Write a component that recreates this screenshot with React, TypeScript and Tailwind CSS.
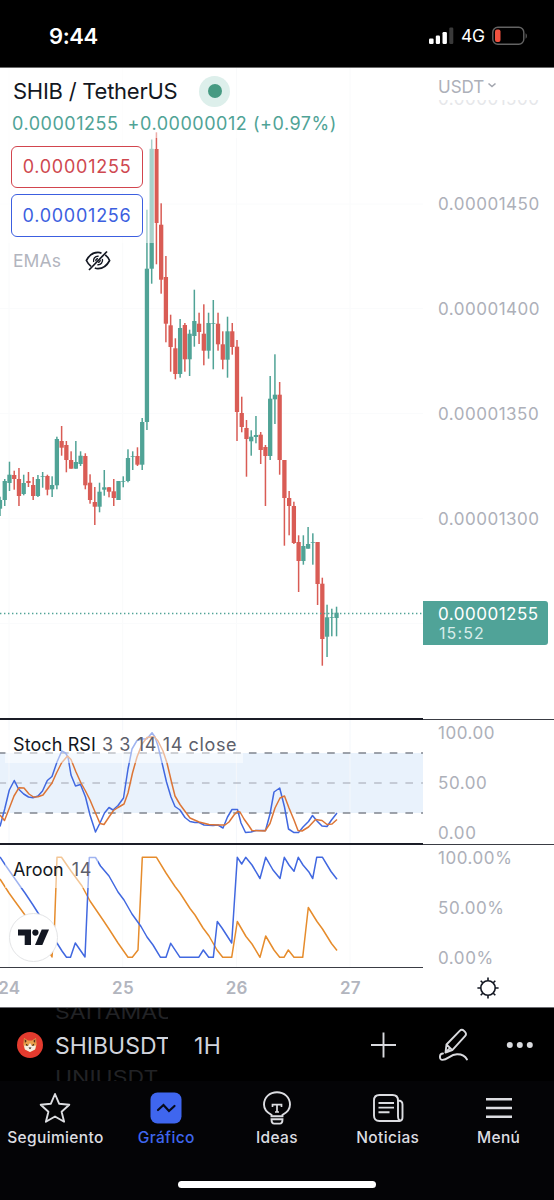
import type { ReactNode } from 'react'

type Candle = [high: number, top: number, bottom: number, low: number, up: 0 | 1]

const STEP = 4.74

const CANDLES: Candle[] = [
  [496.7, 500, 508.7, 516, 1], [479, 481, 500, 506, 1], [461.7, 474.7, 483, 491, 1],
  [470.7, 475, 479, 489.7, 0], [468, 479, 496, 506, 0], [474.7, 483, 494, 495.3, 1],
  [472, 481, 483, 487, 0], [477, 485, 496, 500, 0], [475, 479, 496, 497, 1],
  [472, 476.3, 477, 487.7, 1], [474.7, 476, 489.7, 495.3, 0], [476.3, 485, 489.3, 497, 1],
  [436.7, 439, 485.3, 489.3, 1], [426, 441, 447.7, 455.7, 0], [441, 445, 460, 472.3, 0],
  [451.3, 460, 468.7, 468.7, 0], [441, 462, 468.7, 468.7, 1], [451.3, 455.7, 464, 466, 1],
  [453.3, 456, 485.3, 489.3, 0], [474.3, 482.7, 500, 503.7, 0], [487, 502, 506.7, 525, 0],
  [482.7, 491.7, 506.7, 512.3, 1], [470, 487.3, 489.7, 495.7, 1], [487, 487.3, 491.7, 497.3, 0],
  [479, 491.3, 498, 506, 0], [481, 481, 500, 500, 1], [476.3, 481, 481.7, 487.3, 1],
  [449.3, 458, 481, 482.3, 1], [451.3, 456, 456.7, 470, 1], [447.3, 456, 464.7, 466, 0],
  [418, 422, 464.7, 470, 1], [209.7, 268.7, 422, 430, 1], [139.5, 148.8, 268.7, 283.7, 1],
  [132.3, 149, 223, 264.3, 0], [203.3, 224.7, 279.7, 293.7, 0], [256, 277, 323.7, 342.3, 0],
  [314.7, 325.3, 347, 371.7, 0], [338.3, 348.3, 374, 379.3, 0], [319, 328, 374, 377.7, 1],
  [323, 325, 359.3, 371.7, 0], [329.7, 333.7, 359.3, 376, 1], [289.7, 321, 336, 346.7, 1],
  [312.7, 323.7, 332, 344, 0], [304.3, 333.7, 350.7, 365.3, 0], [312.7, 323, 350.7, 358.7, 1],
  [300, 323.3, 324, 369.3, 1], [312.7, 323.7, 344.3, 350.7, 0], [331.3, 344.3, 359.7, 369.3, 0],
  [316.7, 331.3, 359.7, 377.7, 1], [323, 331.3, 347, 354.7, 0], [340, 346.7, 412, 441, 0],
  [396.7, 413, 427, 432.3, 0], [420, 428, 439, 476.7, 0], [430.3, 436.7, 441.3, 455.7, 1],
  [416, 435, 437, 443.3, 1], [432, 434.7, 450, 464, 0], [445, 447, 456, 506, 0],
  [376, 398.7, 456, 460, 1], [354.3, 394.7, 399.3, 424, 1], [382, 394.7, 460, 474.7, 0],
  [460, 460, 498, 545.7, 0], [491, 498, 506, 535.3, 0], [501.7, 506, 543, 544, 0],
  [535.3, 542, 561, 592, 0], [535.3, 546, 561, 564.7, 1], [527, 544, 548.7, 548.7, 1],
  [533.3, 542.3, 543, 564.7, 1], [542, 542, 584, 605, 0], [577.7, 583.7, 639, 665.7, 0],
  [604.7, 617.3, 636.7, 657, 1], [608.7, 617, 617.7, 636.3, 1], [606.7, 612.7, 618, 636.3, 1],
]

const STOCH_K =
  '0,826.5 4.7,809 9.3,790 14.3,780.5 18.5,789 23.7,794 28.5,797 33,797.7 38,796 42.5,791 47.3,780.5 52,776.5 57,762 61.8,751 65.5,753 68,757 71,775 75.5,786 80.5,784.5 85.5,797 90,815 95.5,832 100,823 104.5,813 109,807.5 113,810 118,805.5 123.5,798 128,769 132,749 137,740.5 142,739 147,738.7 152,732.7 155,737 158,746 163,767 166.5,782 171,797 175,806.5 180,810 185,817.5 190,821.5 195,822.5 199,822.5 204,825 213,825.5 218,825 223,828 227.5,817 232,809.5 237.5,809.5 241,823 245.5,832.5 251,832 256,830.5 265.5,830.5 270,814 274,792 279.7,788 284.5,807 288.5,829 294,832.6 298.5,832.6 303,827 308.5,821.5 312.5,815.5 317,821 322,826 327,826.5 331.5,820 337,813'
const STOCH_D =
  '0,815 4.5,820.5 9,809 14,796 19,787.7 24,788 29,794 33.5,797 38,796.7 43,795 52,783 56.5,773 61.5,763 67.5,756 71,759.5 76,772 81,783 85.5,791 90,800 95.5,813 100,823.5 104,824.5 109,817 113.5,810.5 118,807.5 124,804 128,793 132.5,773 137,757 142,744 147,737.5 154,736.5 158,741 163,751 167,763 171.5,782 175,796 180,804.5 185.5,812 190,818 199,822 209,824.5 218,825 225,825 229,822 234,815 237.5,811.5 240,812 244,819 249,826 252,830.5 265,831 270,823.5 275,808 280,798 284.5,796 289,808 294,820 298,830.5 302,831 308.5,827 315.5,819.5 322,820.5 327,824.5 332,824 337,819.5'
const AROON_UP =
  '0,879 9,893 14,900 25,915 50,953.5 52,957 54.5,926 57,857.3 61.5,857.3 71,871 82,886 90,901 103,920 109,929 118,943 128,957.3 132.3,957.3 138,950 142.3,857.3 156.5,857.3 166,873 175,886.5 180,893 190,908.5 195,915 203,928 209,936 217,950 222.7,957.3 231.7,957.3 237.3,921.5 246,936.5 252,944 260,957.3 265.7,936 274,950 279.7,957.3 284,957.3 288.3,950 294,957.3 302.7,957.3 308.3,907.5 317,921.5 322.5,929 331.5,943.5 337,950.5'
const AROON_DOWN =
  '0,857 6,866 20,886 25,893 33,905 39,914.5 56,941.5 62,951 66.5,957.3 70.5,957.3 75.3,943 85,957 89.3,857.5 95.5,857.5 100.5,866 109,876 118,892 124,900 132,914 141,926.5 147,937 153,945 160.5,957.3 166,957.3 170.7,943.3 180,957.3 198.7,957.3 203.3,950 208.7,957.3 213.3,957.3 217.3,921.5 222,928 231.7,943 237.3,857.3 241.7,864 245.7,857.3 252,865 260,878.5 265.7,857.3 273,870 280,878.5 284.3,857.3 289,865 294,871.3 298.3,857.3 303,865 308.7,871.7 312.7,878.5 316.7,857.3 322.5,857.3 331,871.5 337,879.3'

const DAY_LINES = [9, 122.7, 236.4, 350]
const PRICES = ['0.00001450', '0.00001400', '0.00001350', '0.00001300']

function StatusBar() {
  return (
    <div className="flex h-[68px] items-start border-b border-[#6b6b6b] bg-black pl-[49px] pr-[26px] pt-[22px] text-white">
      <span className="text-[22px] leading-[28px] font-semibold tracking-[-0.4px]">9:44</span>
      <div className="ml-auto flex h-[27px] items-center pt-px">
        <svg width="25" height="18" viewBox="0 0 25 18" fill="#fff">
          <rect x="0" y="11.5" width="4.6" height="5.5" rx="1.2" />
          <rect x="6.8" y="8.5" width="4.2" height="8.5" rx="1.2" />
          <rect x="13.5" y="5" width="4.4" height="12" rx="1.2" />
          <rect x="20.3" y="0.5" width="4" height="16.5" rx="1.2" fill="#3a3a3a" />
        </svg>
        <span className="ml-[7px] w-[24px] text-[17.5px] leading-[20px] tracking-[-0.2px]">4G</span>
        <svg className="ml-[7px]" width="36" height="20" viewBox="0 0 36 20">
          <rect x="0.8" y="1.3" width="31" height="17" rx="5" fill="none" stroke="#636363" strokeWidth="1.4" />
          <rect x="3" y="3.5" width="5.5" height="12.6" rx="2" fill="#f0513f" />
          <path d="M33.6 7.2c1.6.9 1.6 4.6 0 5.5z" fill="#636363" />
        </svg>
      </div>
    </div>
  )
}

function PriceChart() {
  return (
    <svg className="block" width="423" height="650" viewBox="0 68 423 650">
      {DAY_LINES.map((x) => (
        <path key={x} d={`M${x} 68V718`} stroke="#f9fafb" />
      ))}
      {[204, 308.5, 413.5, 518.5, 623.5].map((y) => (
        <path key={y} d={`M0 ${y}H423`} stroke="#fafbfc" />
      ))}
      {CANDLES.map(([high, top, bottom, low, up], i) => {
        const x = i * STEP
        return (
          <g key={i} fill={up ? '#50a396' : '#d95c55'}>
            <rect x={x - 0.75} y={high} width={1.5} height={low - high} />
            <rect x={x - 2.15} y={top} width={4.3} height={bottom - top} />
          </g>
        )
      })}
      <path d="M0 613.5H423" stroke="#50a396" strokeWidth="1.3" strokeDasharray="1.4 2.6" />
    </svg>
  )
}

function PricePane() {
  return (
    <div className="flex h-[652px]">
      <div className="relative w-[423px] border-b-2 border-[#1a1c26]">
        <PriceChart />
        <div className="absolute left-0 top-0 flex flex-col items-start">
          <div className="flex h-[46px] items-center bg-white/50 pl-[13px]">
            <span className="w-[186px] text-[22px] leading-[28px] tracking-[-0.25px] text-[#131722]">SHIB / TetherUS</span>
            <span className="flex size-[31px] items-center justify-center rounded-full bg-[#ddefeb]">
              <span className="size-[14px] rounded-full bg-[#469a82]" />
            </span>
          </div>
          <div className="flex h-[24px] items-start gap-[9px] bg-white/50 pl-[12px] text-[18px] leading-[20px] font-[385] tracking-[0.53px] text-[#50a396]">
            <span>0.00001255</span>
            <span>+0.00000012 (+0.97%)</span>
          </div>
          <div className="flex w-[155px] flex-col gap-[6px] bg-white/50 pb-[6px] pl-[11px] pt-[7.5px]">
            <div className="flex h-[42.5px] w-[132px] items-center justify-center rounded-[6px] border-[1.5px] border-[#d2454e] bg-white text-[18px] font-[385] tracking-[0.75px] text-[#cf4850]">
              0.00001255
            </div>
            <div className="flex h-[42.5px] w-[132px] items-center justify-center rounded-[6px] border-[1.5px] border-[#3c5fe0] bg-white text-[18px] font-[385] tracking-[0.75px] text-[#3c5fe0]">
              0.00001256
            </div>
          </div>
          <div className="flex h-[36px] items-center pl-[13px]">
            <span className="w-[72px] pt-px text-[17.5px] font-[385] tracking-[0.1px] text-[#b2b5be]">EMAs</span>
            <svg width="26" height="22" viewBox="0 0 26 22" fill="none" stroke="#131722" strokeWidth="1.7">
              <path d="M16.5 3.3C15.400 2.700 14.200 2.400 13 2.400C8 2.400 4 5.500 1.400 10.500C2.600 13 4.100 15 6 16.400" />
              <path d="M9.800 18C10.800 18.400 11.900 18.600 13 18.600C18 18.600 22 15.500 24.600 10.500C23.500 8.200 22 6.200 20.200 4.900" />
              <path d="M8.600 12C7.700 8.500 10.300 5.900 13.600 6.300M17.400 9C18.300 12.500 15.700 15.100 12.400 14.700M10.800 11.300C10.700 9.600 11.800 8.600 13 8.700M15.200 9.900C15.300 11.400 14.200 12.400 13 12.300" strokeWidth="1.400" />
              <path d="M4 20L22 1.500" />
            </svg>
          </div>
        </div>
      </div>

      <div className="relative flex-1 border-b border-[#3a3c44] pl-[15px] font-[385] text-[#adb0b9]">
        <div className="flex h-[32px] items-start gap-[3px] pt-[7px] text-[17px] leading-[24px]">
          USDT
          <svg className="mt-[7px]" width="10" height="7" viewBox="0 0 10 7" fill="none" stroke="#a3a6af" strokeWidth="1.6">
            <path d="M1.500 1.500L5 4.500L8.500 1.500" />
          </svg>
        </div>
        <div className="flex h-[7px] items-end overflow-hidden text-[17px] leading-[15px] tracking-[0.5px] text-[#e6e7ea]">
          0.00001500
        </div>
        <div className="mt-[45.5px] text-[17px] tracking-[0.5px]">
          {PRICES.map((price) => (
            <div key={price} className="flex h-[105px] items-center">
              {price}
            </div>
          ))}
        </div>
        <div className="absolute left-0 top-[533px] h-[44px] w-[125px] rounded-r-[3px] bg-[#50a398] pl-[15px] pt-[3px] text-[17px] leading-[20px] font-normal tracking-[0.5px] text-white">
          <div>0.00001255</div>
          <div className="pl-px text-[16px] leading-[19px] font-[385] tracking-[1.1px] text-[#d8edea]">15:52</div>
        </div>
      </div>
    </div>
  )
}

function StochPane() {
  return (
    <div className="flex h-[125px]">
      <div className="relative w-[423px] border-b-2 border-[#1a1c26]">
        <svg className="block" width="423" height="123" viewBox="0 720 423 123">
          <rect x="0" y="753" width="423" height="60" fill="#e9f2fc" />
          {DAY_LINES.map((x) => (
            <path key={x} d={`M${x} 720V843`} stroke="#f4f7fb" />
          ))}
          <path d="M-1.500 753H423M-1.500 813H423" stroke="#80858f" strokeWidth="1.600" strokeDasharray="7.600 8.050" />
          <path d="M-1.500 783H423" stroke="#b9bfc9" strokeWidth="1.400" strokeDasharray="7.600 8.050" />
          <g fill="none" strokeWidth="1.500" strokeLinejoin="round">
            <polyline points={STOCH_K} stroke="#4168e0" />
            <polyline points={STOCH_D} stroke="#dc7536" />
          </g>
        </svg>
        <div className="absolute left-[5px] top-[10px] flex h-[33px] w-[238px] items-start gap-[6px] bg-white/50 pl-[8px] pt-[3px] text-[18px] leading-[24px] text-[#131722]">
          <span className="whitespace-nowrap tracking-[0.1px]">Stoch RSI</span>
          <span className="whitespace-nowrap font-[385] tracking-[0.63px] text-[#5d606b]">3 3 14 14 close</span>
        </div>
      </div>
      <div className="flex flex-1 flex-col justify-between border-b border-[#3a3c44] pb-px pl-[15px] pt-[3px] text-[17px] leading-[20px] font-[385] tracking-[0.55px] text-[#adb0b9]">
        <span>100.00</span>
        <span>50.00</span>
        <span>0.00</span>
      </div>
    </div>
  )
}

function AroonPane() {
  return (
    <div className="flex h-[123px]">
      <div className="relative w-[423px] border-b border-[#3a3c44]">
        <svg className="block" width="423" height="122" viewBox="0 845 423 122">
          {DAY_LINES.map((x) => (
            <path key={x} d={`M${x} 845V967`} stroke="#f9fafb" />
          ))}
          <g fill="none" strokeWidth="1.500" strokeLinejoin="round">
            <polyline points={AROON_UP} stroke="#e68c2c" />
            <polyline points={AROON_DOWN} stroke="#4168e0" />
          </g>
        </svg>
        <div className="absolute left-[5px] top-[10px] flex h-[33px] w-[93px] gap-[8px] bg-white/50 pl-[8px] pt-[3px] text-[18px] leading-[24px] text-[#131722]">
          <span className="tracking-[-0.1px]">Aroon</span>
          <span className="font-[385] tracking-[0.9px] text-[#5d606b]">14</span>
        </div>
        <div className="absolute left-[9px] top-[68px] flex size-[49px] items-center justify-center rounded-full border-[1.5px] border-[#e3e4e6] bg-white">
          <svg width="31" height="17" viewBox="0 0 31 17" fill="#131722">
            <path d="M0 0.500H13V16H6.700V6.600H0z" />
            <circle cx="17.400" cy="3.600" r="3.100" />
            <path d="M23.700 0.500H31L24.300 16H17z" />
          </svg>
        </div>
      </div>
      <div className="flex flex-1 flex-col justify-between pl-[15px] pt-[3px] text-[17px] leading-[20px] font-[385] tracking-[0.55px] text-[#adb0b9]">
        <span>100.00%</span>
        <span>50.00%</span>
        <span>0.00%</span>
      </div>
    </div>
  )
}

function TimeAxis() {
  return (
    <div className="flex h-[40px] overflow-hidden border-b border-[#6c6d72]">
      <div className="-ml-[47.5px] flex w-[470.5px] text-[17px] leading-[41px] font-semibold tracking-[0.3px] text-[#b2b5be]">
        {['24', '25', '26', '27'].map((day) => (
          <span key={day} className="w-[113.7px] shrink-0 text-center">
            {day}
          </span>
        ))}
      </div>
      <div className="flex flex-1 items-center justify-center pr-px">
        <svg width="22" height="22" viewBox="0 0 22 22" fill="none" stroke="#131722" strokeWidth="1.600">
          <circle cx="11" cy="11" r="7.200" />
          <path d="M11 0.400V3.800M11 18.200V21.600M0.400 11H3.800M18.200 11H21.600M3.700 3.700L5.700 5.700M16.300 16.300L18.300 18.300M18.300 3.700L16.300 5.700M5.700 16.300L3.700 18.300" />
        </svg>
      </div>
    </div>
  )
}

function ShibaLogo() {
  return (
    <svg width="26" height="26" viewBox="0 0 26 26">
      <circle cx="13" cy="13" r="13" fill="#e33b2e" />
      <path d="M7 6l4 2.500h4L19 6l.6 6.500-1.300 4.700L13 20l-5.300-2.800L6.400 12.500z" fill="#e9a04c" />
      <path d="M7.600 7l2.200 2-1.900 2zM18.400 7l-2.200 2 1.900 2z" fill="#5b2f1d" />
      <path d="M7 13.500l4 .5 2-3 2 3 4-.5-1 4L13 20l-5-2.500z" fill="#f6ecdf" />
      <path d="M8.700 11.800l2.700 1.500-1.900.4zM17.300 11.800l-2.700 1.500 1.900.4zM11.500 15.500h3L13 17.300z" fill="#241813" />
    </svg>
  )
}

function Toolbar() {
  return (
    <div className="flex h-[73px] overflow-hidden bg-black pl-[17px] text-[#d1d4dc]">
      <div className="flex items-center pt-px">
        <ShibaLogo />
      </div>
      <div className="ml-[12px] flex w-[113px] flex-col items-start justify-between overflow-hidden whitespace-nowrap text-[23px]">
        <span className="-mt-[8px] scale-y-80 leading-[26px] text-[#222326]">SAITAMAUSDT</span>
        <span className="leading-[28px]">SHIBUSDT</span>
        <span className="-mb-[10px] scale-y-80 leading-[26px] text-[#222326]">UNIUSDT</span>
      </div>
      <span className="ml-[26px] text-[23px] leading-[76px] tracking-[0.5px]">1H</span>
      <svg className="ml-auto mr-[14px] mt-[20px]" width="170" height="36" viewBox="0 0 170 36" fill="none" stroke="#d9dade" strokeWidth="1.900">
        <path d="M1 17H26M13.500 4.500V29.500" />
        <g strokeLinejoin="round" strokeLinecap="round">
          <path d="M75.500 24.500L76.500 16.500L89.700 2.900Q91.800 0.800 94 2.900L95 3.900Q97 6 95 8.200L82.300 22.100L75.500 24.500ZM76.500 16.500L82.300 22.100M75.500 24.500L79 21" />
          <path d="M73 25.500C69 25.500 69 32 72.500 31.900C78 31.700 80 26.500 87 26.300C92 26.200 95.500 28.500 97 31.500" />
        </g>
        <g fill="#d9dade" stroke="none">
          <circle cx="139.800" cy="17" r="3" />
          <circle cx="149.800" cy="17" r="3" />
          <circle cx="159.800" cy="17" r="3" />
        </g>
      </svg>
    </div>
  )
}

function NavItem({ label, active, children }: { label: string; active?: boolean; children: ReactNode }) {
  return (
    <div className={active ? 'flex flex-col items-center text-[#3f66ef]' : 'flex flex-col items-center text-[#dcdde1]'}>
      <svg width="36" height="36" viewBox="0 0 36 36" fill="none" stroke="currentColor" strokeWidth="1.900">
        {children}
      </svg>
      <span className="mt-[2px] text-[15.5px] leading-[20px] font-medium tracking-[0.35px]">{label}</span>
    </div>
  )
}

function BottomNav() {
  return (
    <div className="flex h-[119px] flex-col items-center bg-[#040406]">
      <div className="grid w-full grid-cols-5 pt-[9px]">
        <NavItem label="Seguimiento">
          <path d="M18 4L22.100 13.700L32.300 14.700L24.600 21.700L27.100 31.700L18 26.500L8.900 31.700L11.400 21.700L3.700 14.700L13.900 13.700Z" strokeLinejoin="round" />
        </NavItem>
        <NavItem label="Gráfico" active>
          <rect x="2.500" y="2.500" width="31" height="31" rx="7" fill="#3f66ef" stroke="none" />
          <path d="M10 20L15.500 15L21 21L26.500 16" stroke="#070b1c" strokeWidth="2.200" strokeLinecap="round" />
        </NavItem>
        <NavItem label="Ideas">
          <path d="M12.500 26.300V24.800C8 22.700 5 19.500 5 14.600C5 7.200 10.800 2.200 18 2.200S31 7.200 31 14.600C31 19.500 28 22.700 23.500 24.800V26.300ZM12.500 29.300H23.500C23.500 32.300 22.500 33.600 20.800 33.600H15.200C13.500 33.600 12.500 32.300 12.500 29.300Z" />
          <path d="M13.500 17V14.700H22.500V17M18 14.700V22M16 22H20" strokeWidth="1.700" />
        </NavItem>
        <NavItem label="Noticias">
          <path d="M9.500 5H22.500Q28 5 28 10.500V26Q28 31 31 30.500Q32.500 30 32.500 27V14.500Q32.500 10.500 28 10.500M30.500 31H9.500Q4 31 4 25.500V10.500Q4 5 9.500 5" />
          <path d="M8.500 13H24M8.500 17.600H24M8.500 22.200H19.500" />
        </NavItem>
        <NavItem label="Menú">
          <path d="M5 9.200H31M5 18H31M5 26.700H31" strokeWidth="2.600" />
        </NavItem>
      </div>
      <div className="mt-[33px] h-[7px] w-[198px] rounded-full bg-white" />
    </div>
  )
}

export default function App() {
  return (
    <div className="w-[554px] overflow-hidden bg-white font-['Inter',sans-serif]">
      <StatusBar />
      <PricePane />
      <StochPane />
      <AroonPane />
      <TimeAxis />
      <Toolbar />
      <BottomNav />
    </div>
  )
}
